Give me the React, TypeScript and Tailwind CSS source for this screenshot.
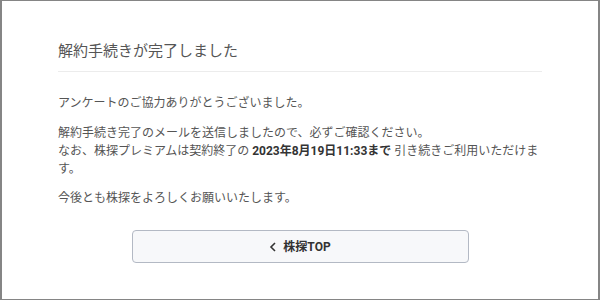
export default function App() {
  return (
    <div
      className="w-[600px] h-[300px] bg-white border-y border-x-2 border-[#858585] text-[#555] overflow-hidden"
      style={{ fontFamily: "Roboto, 'Noto Sans CJK JP', sans-serif" }}
    >
      <div className="px-[56px] pt-[38px]">
        <h1 className="text-[15px] leading-[24px] text-[#555] pb-[8px] border-b border-[#ececec]">
          解約手続きが完了しました
        </h1>

        <div className="pt-[22px] text-[12px] leading-[18px]">
          <p>アンケートのご協力ありがとうございました。</p>
          <p className="mt-[12px]">
            解約手続き完了のメールを送信しましたので、必ずご確認ください。
            <br />
            なお、株探プレミアムは契約終了の{' '}
            <span className="font-bold text-[#333]">2023年8月19日11:33まで</span>{' '}
            引き続きご利用いただけます。
          </p>
          <p className="mt-[11px]">今後とも株探をよろしくお願いいたします。</p>
        </div>

        <div className="flex justify-center mt-[23px]">
          <button className="w-[337px] h-[33px] flex items-center justify-center gap-[6px] rounded-[4px] border border-[#b3b9c4] bg-[#f7f8fa] text-[12px] font-bold text-[#333]">
            <svg width="8" height="10" viewBox="0 0 8 10" fill="none">
              <path d="M6 1L2 5l4 4" stroke="#333" strokeWidth="1.6" />
            </svg>
            <span>株探TOP</span>
          </button>
        </div>
      </div>
    </div>
  );
}
